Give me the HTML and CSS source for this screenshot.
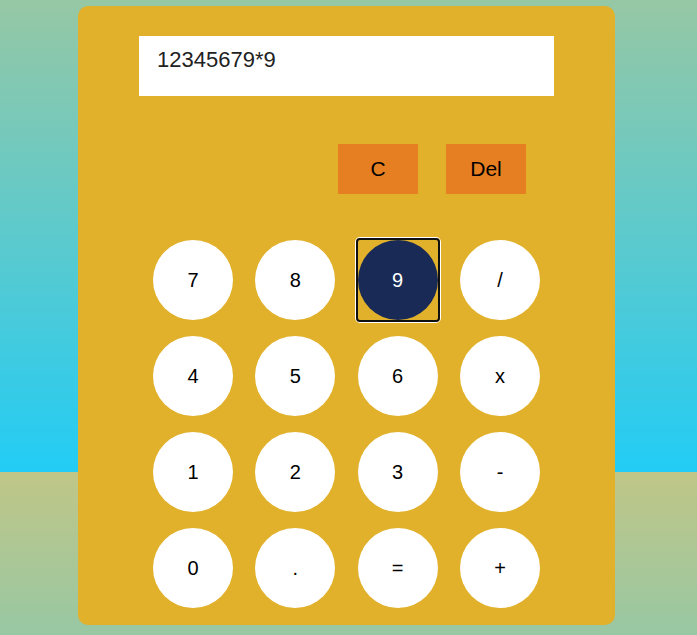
FILE: index.html
```html
<!DOCTYPE html>
<html lang="en">
<head>
<meta charset="utf-8">
<title>Calculator</title>
<link rel="stylesheet" href="styles.css">
</head>
<body>
  <div class="calculator">
    <div class="display">12345679*9</div>
    <div class="controls">
      <button class="ctrl">C</button>
      <button class="ctrl">Del</button>
    </div>
    <div class="keys">
      <button class="key">7</button>
      <button class="key">8</button>
      <button class="key active">9</button>
      <button class="key">/</button>
      <button class="key">4</button>
      <button class="key">5</button>
      <button class="key">6</button>
      <button class="key">x</button>
      <button class="key">1</button>
      <button class="key">2</button>
      <button class="key">3</button>
      <button class="key">-</button>
      <button class="key">0</button>
      <button class="key">.</button>
      <button class="key">=</button>
      <button class="key">+</button>
    </div>
  </div>
</body>
</html>
```

FILE: styles.css
```css
html {
  min-height: 100%;
  background-image: linear-gradient(#c0c687, #22ccf5);
  background-size: 100% 640px;
  background-position: 0 -168px;
  background-repeat: repeat-y;
}

body {
  margin: 0;
  padding: 6px 0 0 78px;
  font-family: "Liberation Sans", Arial, sans-serif;
}

.calculator {
  width: 537px;
  height: 619px;
  box-sizing: border-box;
  background: #e1b12c;
  border-radius: 10px;
  padding: 30px 0 0;
  display: flex;
  flex-direction: column;
  align-items: center;
}

.display {
  width: 415px;
  height: 60px;
  box-sizing: border-box;
  background: #fff;
  padding: 11px 18px 0;
  font-size: 22px;
  color: #222;
  line-height: 26px;
}

.controls {
  align-self: stretch;
  display: flex;
  justify-content: flex-end;
  gap: 28px;
  padding: 48px 89px 0 0;
}

.ctrl {
  width: 80px;
  height: 50px;
  border: none;
  background: #e67e22;
  font-family: inherit;
  font-size: 21px;
  color: #000;
  padding: 0;
}

.keys {
  margin-top: 46px;
  width: 387px;
  display: grid;
  grid-template-columns: repeat(4, 80px);
  justify-content: space-between;
  row-gap: 16px;
}

.key {
  position: relative;
  width: 80px;
  height: 80px;
  border: none;
  border-radius: 50%;
  background: #fff;
  font-family: inherit;
  font-size: 20px;
  color: #000;
  padding: 0;
}

.key.active {
  background: #192a56;
  color: #fff;
}

.key.active::after {
  content: "";
  position: absolute;
  inset: -2px;
  border: 2px solid #101010;
  border-radius: 4px;
  box-shadow: 0 0 0 1px #fff;
}
```
